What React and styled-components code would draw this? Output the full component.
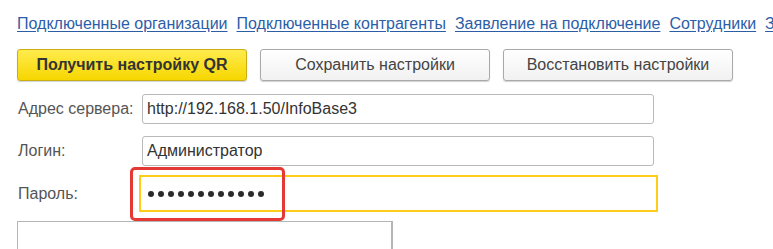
import styled, { createGlobalStyle } from "styled-components";

const GlobalStyle = createGlobalStyle`
  html, body {
    margin: 0;
    padding: 0;
    background: #ffffff;
    overflow: hidden;
  }
  body {
    font-family: "Liberation Sans", Arial, sans-serif;
    color: #4d4d4d;
  }
`;

const Page = styled.div`
  width: 773px;
  height: 249px;
  padding-left: 17px;
  box-sizing: border-box;
  overflow: hidden;
`;

const LinkBar = styled.nav`
  display: flex;
  gap: 9px;
  padding-top: 14px;
  height: 21px;
  white-space: nowrap;
`;

const NavLink = styled.a`
  font-size: 16px;
  line-height: 19px;
  color: #2c5ea8;
  text-decoration: underline;
  text-underline-offset: 2px;
  cursor: pointer;
`;

const ButtonRow = styled.div`
  display: flex;
  gap: 13px;
  margin-top: 14px;
`;

const Button = styled.button`
  width: 230px;
  height: 32px;
  box-sizing: border-box;
  border-radius: 3px;
  font-family: "Liberation Sans", Arial, sans-serif;
  font-size: 16px;
  cursor: pointer;
  border: 1px solid ${(p) => (p.$primary ? "#c9ad12" : "#a9a9a9")};
  background: ${(p) =>
    p.$primary
      ? "linear-gradient(#ffec4d, #f6d600)"
      : "linear-gradient(#ffffff, #f1f1f1)"};
  color: ${(p) => (p.$primary ? "#333333" : "#444444")};
  font-weight: ${(p) => (p.$primary ? "bold" : "normal")};
  box-shadow: 0 1px 1px rgba(0, 0, 0, 0.18);
`;

const Form = styled.div`
  display: flex;
  flex-direction: column;
  margin-top: 13px;
`;

const Row = styled.div`
  display: grid;
  grid-template-columns: 125px 512px;
  align-items: center;
  margin-bottom: ${(p) => p.$gap}px;
`;

const Label = styled.label`
  font-size: 16px;
  color: #555555;
  padding-left: 1px;
`;

const Field = styled.div`
  height: 30px;
  box-sizing: border-box;
  border: 1px solid #b9b9b9;
  border-radius: 3px;
  padding-left: 4px;
  display: flex;
  align-items: center;
  font-size: 16px;
  color: #333333;
  background: #ffffff;
`;

const PasswordCell = styled.div`
  position: relative;
  margin-left: -3px;
  width: 519px;
`;

const PasswordField = styled.div`
  height: 37px;
  box-sizing: border-box;
  border: 2px solid #ffcc1a;
  padding-left: 7px;
  display: flex;
  align-items: center;
  gap: 4px;
  background: #ffffff;
`;

const Dot = styled.span`
  width: 6px;
  height: 6px;
  border-radius: 50%;
  background: #2b2b2b;
`;

const Highlight = styled.div`
  position: absolute;
  left: -9px;
  top: -8px;
  width: 155px;
  height: 54px;
  box-sizing: border-box;
  border: 3px solid #e53935;
  border-radius: 5px;
  pointer-events: none;
`;

const Memo = styled.div`
  width: 376px;
  height: 60px;
  box-sizing: border-box;
  border: 1px solid #b5b5b5;
  border-right-width: 2px;
  margin-top: 9px;
  background: #ffffff;
`;

const links = [
  "Подключенные организации",
  "Подключенные контрагенты",
  "Заявление на подключение",
  "Сотрудники",
  "Зарплатные проекты",
];

export default function App() {
  return (
    <Page>
      <GlobalStyle />
      <LinkBar>
        {links.map((l) => (
          <NavLink key={l}>{l}</NavLink>
        ))}
      </LinkBar>
      <ButtonRow>
        <Button $primary>Получить настройку QR</Button>
        <Button>Сохранить настройки</Button>
        <Button>Восстановить настройки</Button>
      </ButtonRow>
      <Form>
        <Row $gap={12}>
          <Label>Адрес сервера:</Label>
          <Field>http://192.168.1.50/InfoBase3</Field>
        </Row>
        <Row $gap={9}>
          <Label>Логин:</Label>
          <Field>Администратор</Field>
        </Row>
        <Row $gap={0}>
          <Label>Пароль:</Label>
          <PasswordCell>
            <PasswordField>
              {Array.from({ length: 12 }).map((_, i) => (
                <Dot key={i} />
              ))}
            </PasswordField>
            <Highlight />
          </PasswordCell>
        </Row>
        <Memo />
      </Form>
    </Page>
  );
}
